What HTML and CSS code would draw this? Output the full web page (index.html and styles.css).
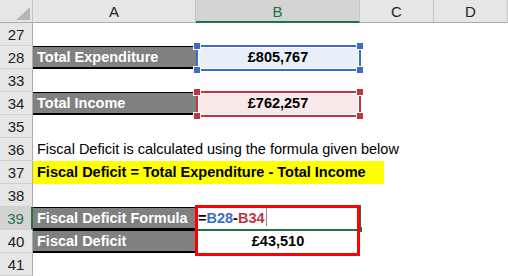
FILE: index.html
```html
<!DOCTYPE html>
<html>
<head>
<meta charset="utf-8">
<link rel="stylesheet" href="styles.css">
</head>
<body>
<div class="sheet">
  <div class="hdr corner"><svg class="tri" width="33" height="23" viewBox="0 0 33 23"><polygon points="30,7 30,20 16,20" fill="#b6b6b6"/></svg></div>
  <div class="hdr col">A</div>
  <div class="hdr col sel">B</div>
  <div class="hdr col">C</div>
  <div class="hdr col">D</div>

  <div class="rn">27</div><div class="c"></div><div class="c"></div><div class="c"></div><div class="c"></div>

  <div class="rn">28</div>
  <div class="c lbl">Total Expenditure</div>
  <div class="c val ref-blue">£805,767<span class="box blue"><i class="h tl"></i><i class="h tr"></i><i class="h bl"></i><i class="h br"></i></span></div>
  <div class="c"></div><div class="c"></div>

  <div class="rn">33</div><div class="c"></div><div class="c"></div><div class="c"></div><div class="c"></div>

  <div class="rn">34</div>
  <div class="c lbl">Total Income</div>
  <div class="c val ref-red">£762,257<span class="box red"><i class="h tl"></i><i class="h tr"></i><i class="h bl"></i><i class="h br"></i></span></div>
  <div class="c"></div><div class="c"></div>

  <div class="rn">35</div><div class="c"></div><div class="c"></div><div class="c"></div><div class="c"></div>

  <div class="rn">36</div>
  <div class="c txt">Fiscal Deficit is calculated using the formula given below</div>
  <div class="c"></div><div class="c"></div><div class="c"></div>

  <div class="rn">37</div>
  <div class="c txt"><span class="hl">Fiscal Deficit = Total Expenditure - Total Income</span></div>
  <div class="c"></div><div class="c"></div><div class="c"></div>

  <div class="rn">38</div><div class="c"></div><div class="c"></div><div class="c"></div><div class="c"></div>

  <div class="rn active">39</div>
  <div class="c lbl">Fiscal Deficit Formula</div>
  <div class="c formula"><span class="k">=</span><span class="rb">B28</span><span class="k">-</span><span class="rr">B34</span><span class="caret"></span><span class="active-box"><i class="fill-h"></i></span><span class="mark"></span></div>
  <div class="c"></div><div class="c"></div>

  <div class="rn">40</div>
  <div class="c lbl">Fiscal Deficit</div>
  <div class="c val">£43,510</div>
  <div class="c"></div><div class="c"></div>

  <div class="rn">41</div><div class="c"></div><div class="c"></div><div class="c"></div><div class="c"></div>
</div>
</body>
</html>
```
FILE: styles.css
```css
* { box-sizing: border-box; }
html, body { margin: 0; padding: 0; background: #fff; }
body { width: 508px; height: 276px; overflow: hidden; }

.sheet {
  display: grid;
  grid-template-columns: 33px 163px 164px 74px 74px;
  grid-auto-rows: 23px;
  font-family: "Liberation Sans", Arial, sans-serif;
  font-size: 14.5px;
  line-height: 23px;
  color: #000;
}

.hdr {
  background: #e6e6e6;
  border-right: 1px solid #c4c4c4;
  border-bottom: 1px solid #ababab;
  text-align: center;
  color: #222;
  font-size: 15px;
}
.corner { position: relative; }
.tri { display: block; }
.col.sel {
  background: #d3d3d3;
  color: #217346;
  border-bottom: 2px solid #217346;
}

.rn {
  background: #e6e6e6;
  border-right: 1px solid #ababab;
  border-bottom: 1px solid #d0d0d0;
  text-align: center;
  color: #222;
  font-size: 15px;
}
.rn.active {
  background: #d3d3d3;
  color: #217346;
  border-right: 2px solid #217346;
}

.c {
  position: relative;
  white-space: nowrap;
  min-width: 0;
}

.lbl {
  background: #808080;
  color: #fff;
  font-weight: bold;
  padding-left: 4px;
  border-top: 1px solid #000;
  border-bottom: 2px solid #000;
  line-height: 20px;
}

.txt { padding-left: 4px; overflow: visible; z-index: 1; }
.hl {
  display: inline-block;
  background: #ffff00;
  font-weight: bold;
  margin-left: -4px;
  padding: 0 18px 0 4px;
  line-height: 23px;
}

.val { text-align: center; font-weight: bold; }
.ref-blue { background: #e9eff9; }
.ref-red { background: #f9e8e9; }

.box {
  position: absolute;
  left: 0;
  top: -1px;
  width: 165px;
  height: 26px;
  border: 2px solid;
  box-shadow: inset 0 0 0 1px #fff;
}
.box.blue { border-color: #3a6ccb; }
.box.red { border-color: #c1353f; }
.box .h {
  position: absolute;
  width: 6px;
  height: 6px;
  outline: 1px solid #fff;
}
.box.blue .h { background: #3a6ccb; }
.box.red .h { background: #c1353f; }
.h.tl { left: -4px; top: -4px; }
.h.tr { right: -4px; top: -4px; }
.h.bl { left: -4px; bottom: -4px; }
.h.br { right: -4px; bottom: -4px; }

.formula { font-weight: bold; padding-left: 2px; }
.formula .k { color: #000; }
.formula .rb { color: #3a6ccb; }
.formula .rr { color: #c1353f; }
.caret {
  display: inline-block;
  width: 1px;
  height: 18px;
  background: #8a8a8a;
  vertical-align: -3px;
  margin-left: 1px;
}
.active-box {
  position: absolute;
  left: -1px;
  top: -2px;
  width: 166px;
  height: 26px;
  border: 2px solid #217346;
}
.fill-h {
  position: absolute;
  right: -3px;
  bottom: -3px;
  width: 4px;
  height: 5px;
  background: #217346;
}
.mark {
  position: absolute;
  left: -1px;
  top: -2px;
  width: 165px;
  height: 51px;
  border: 3px solid #ff0000;
  z-index: 2;
}
```
